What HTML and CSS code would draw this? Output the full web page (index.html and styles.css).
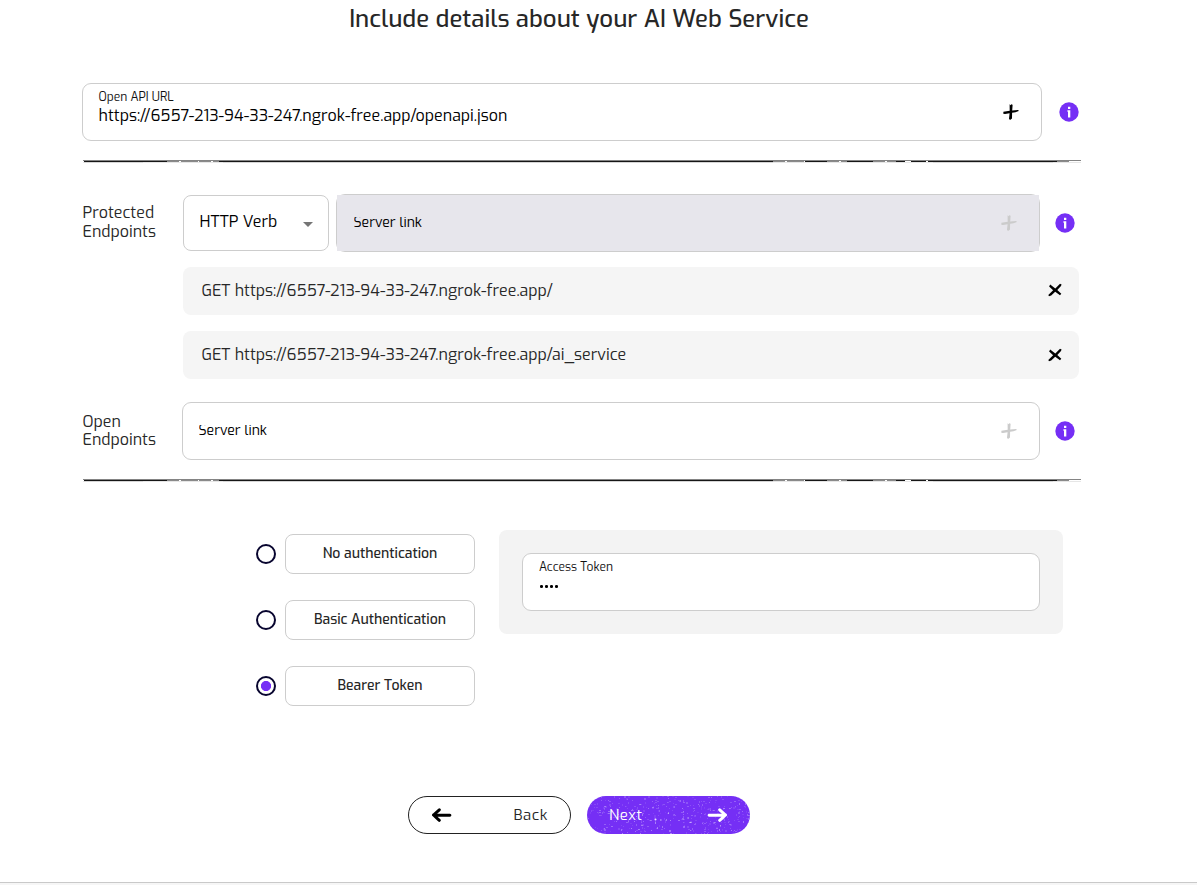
FILE: index.html
```
<!DOCTYPE html>
<html lang="en">
<head>
<meta charset="utf-8">
<title>AI Web Service</title>
<link rel="stylesheet" href="styles.css">
</head>
<body>
<svg class="defs" aria-hidden="true">
  <symbol id="plus" viewBox="0 0 18 18">
    <path d="M7.6 1.3 8.8 2.2 9.7 1 10.6 2 10.2 7.5 16.2 6.9 16.8 8 13.5 9.3 10.1 9.8 10 15.5 8 17 7 15.8 7.6 10.3 3 11 1.3 10.8 1.4 8.8 7.7 7.8Z" fill="currentColor"/>
  </symbol>
  <symbol id="cross" viewBox="0 0 14 14">
    <path d="M2.2 1.5 7.3 5.5 12 .8 13.6 1.4 13 3 9.3 6.9 13.3 10.7 12 12.2 7.2 8.8 3.2 12.4 1 13.2.3 12 5.1 7.2 1.1 3.5Z" fill="currentColor"/>
  </symbol>
  <symbol id="info" viewBox="0 0 20 20">
    <circle cx="10" cy="10" r="9.7" fill="#752ff5"/>
    <path d="M9 4.8h2.3v2.2h-2.3zM8.4 8.3h2.9v7.2H9V9.7h-.6z" fill="#fff"/>
  </symbol>
  <symbol id="arrow" viewBox="0 0 20 14">
    <path d="M1.6 7.2 18 7M12.2 1.8 18 7 12.2 12.3" fill="none" stroke="currentColor" stroke-width="3" stroke-linecap="round" stroke-linejoin="round"/>
  </symbol>
  <symbol id="rule" viewBox="0 0 998 3">
    <path d="M0 .5H998" stroke="#848484"/>
    <path d="M1 1.5H84M136 1.5H690M722 1.5H744M764 1.5H790M813 1.5H822M828 1.5H843M845 1.5H974" stroke="#161616"/>
    <path d="M84 1.5H136M690 1.5H722M744 1.5H764M790 1.5H813M974 1.5H986" stroke="#8a8a8a" stroke-dasharray="12 2 17 1"/>
    <path d="M1 2.5H60M140 2.5H690M850 2.5H970" stroke="#a5a5a5" stroke-opacity=".45"/>
    <path d="M0 2.5H1M60 2.5H140M690 2.5H850M970 2.5H998" stroke="#e6e6e6"/>
  </symbol>
</svg>

<main class="page">
  <h1 class="title">Include details about your AI Web Service</h1>

  <div class="row row-url">
    <div class="field field-url">
      <div class="stack">
        <span class="caption">Open API URL</span>
        <span class="value">https://6557-213-94-33-247.ngrok-free.app/openapi.json</span>
      </div>
      <svg class="plus"><use href="#plus"/></svg>
    </div>
    <svg class="info"><use href="#info"/></svg>
  </div>

  <svg class="rule"><use href="#rule"/></svg>

  <div class="row row-protected">
    <div class="label">Protected<br>Endpoints</div>
    <div class="select"><span>HTTP Verb</span><i class="caret"></i></div>
    <div class="field field-muted">
      <div class="field-fill">
        <span class="placeholder">Server link</span>
        <svg class="plus plus-off"><use href="#plus"/></svg>
      </div>
    </div>
    <svg class="info"><use href="#info"/></svg>
  </div>

  <div class="entries">
    <div class="entry"><span>GET https://6557-213-94-33-247.ngrok-free.app/</span><svg class="cross cross-first"><use href="#cross"/></svg></div>
    <div class="entry"><span>GET https://6557-213-94-33-247.ngrok-free.app/ai_service</span><svg class="cross"><use href="#cross"/></svg></div>
  </div>

  <div class="row row-open">
    <div class="label">Open<br>Endpoints</div>
    <div class="field field-open">
      <span class="placeholder">Server link</span>
      <svg class="plus plus-off"><use href="#plus"/></svg>
    </div>
    <svg class="info"><use href="#info"/></svg>
  </div>

  <svg class="rule"><use href="#rule"/></svg>

  <div class="auth">
    <div class="options">
      <div class="option"><i class="radio"></i><span class="choice">No authentication</span></div>
      <div class="option"><i class="radio"></i><span class="choice">Basic Authentication</span></div>
      <div class="option"><i class="radio radio-on"></i><span class="choice">Bearer Token</span></div>
    </div>
    <div class="panel">
      <div class="field field-token">
        <div class="stack">
          <span class="caption">Access Token</span>
          <span class="dots"><i></i><i></i><i></i><i></i></span>
        </div>
      </div>
    </div>
  </div>

  <div class="actions">
    <div class="btn btn-back"><svg class="arrow arrow-left"><use href="#arrow"/></svg><span>Back</span></div>
    <div class="btn btn-next"><svg class="grain" id="grain" viewBox="0 0 163 38"></svg><span>Next</span><svg class="arrow"><use href="#arrow"/></svg></div>
  </div>
</main>
<footer class="footer"></footer>
<script src="grain.js"></script>
</body>
</html>
```
FILE: styles.css
```
* { box-sizing: border-box; }
body {
  margin: 0;
  height: 885px;
  overflow: hidden;
  display: flex;
  flex-direction: column;
  background: #fff;
  color: #272727;
  font: 16px/18.5px Exo, "Exo 2", Roboto, sans-serif;
}
.defs { position: absolute; width: 0; height: 0; }
svg, i { display: block; flex: none; }
.page { height: 882px; flex: none; padding: 0 116px 0 82px; }
.title {
  margin: 0;
  height: 38px;
  padding-right: 5px;
  text-align: center;
  font-size: 24px;
  font-weight: 500;
  line-height: 38px;
}
.row { display: flex; }
.row-url { margin-top: 45px; height: 58px; align-items: center; }
.field {
  display: flex;
  align-items: center;
  justify-content: space-between;
  height: 58px;
  border: 1px solid #cdcdcd;
  border-radius: 9px;
  background: #fff;
  color: #000;
}
.field-url { width: 960px; padding: 0 21px 0 15.5px; }
.stack { align-self: flex-start; display: flex; flex-direction: column; }
.caption { padding-top: 5px; font-size: 12px; line-height: 16px; color: #111; }
.value { line-height: 22px; }
.info { width: 20px; height: 20px; }
.row-url .info { margin-left: 17px; }
.plus { width: 18px; height: 18px; }
.field-url .plus { margin-bottom: 1px; }
.plus-off { color: #cbcbcb; }
.rule { width: 998px; height: 3px; margin: 19px 0 0 1px; }

.row-protected { margin-top: 31px; height: 58px; align-items: center; }
.label { width: 101px; padding: 0 0 1px .5px; }
.row-open .label { width: 100px; padding-bottom: 0; }
.select {
  width: 146px;
  height: 56px;
  display: flex;
  align-items: center;
  justify-content: space-between;
  padding: 0 15px 0 15.5px;
  border: 1px solid #cdcdcd;
  border-radius: 8px;
  color: #000;
}
.select span { padding-bottom: 2px; }
.caret {
  margin-top: 3px;
  border: 5px solid transparent;
  border-top-color: #757575;
  border-bottom: 0;
}
.field-muted { width: 704px; margin-left: 7px; }
.field-fill {
  flex: 1;
  display: flex;
  align-items: center;
  justify-content: space-between;
  height: 56px;
  padding: 0 21px 0 16.5px;
  background: #e7e6ec;
}
.placeholder {
  height: 14px;
  margin-top: 2px;
  overflow: hidden;
  font-size: 14px;
  line-height: 11px;
}
.row-protected .info, .row-open .info { margin-left: 15px; }

.entries { display: grid; gap: 16px; margin: 15px 0 0 101px; width: 896px; }
.entry {
  display: flex;
  align-items: center;
  justify-content: space-between;
  height: 48px;
  padding: 0 17px 0 18.5px;
  border-radius: 8px;
  background: #f5f5f5;
}
.cross { width: 14px; height: 14px; color: #000; }
.cross-first { margin-bottom: 2px; }

.row-open { margin-top: 23px; height: 58px; align-items: center; }
.field-open { width: 858px; padding: 0 21px 0 15.5px; }

.auth { display: flex; margin: 48px 0 0 174px; height: 176px; }
.options { display: grid; gap: 26px; padding-top: 4px; align-content: start; }
.option { display: flex; align-items: center; gap: 9px; height: 40px; }
.radio {
  width: 20px;
  height: 20px;
  border: 2px solid #08052f;
  border-radius: 50%;
}
.radio-on { background: radial-gradient(circle, #752ff5 4.7px, transparent 5.4px); }
.choice {
  width: 190px;
  height: 40px;
  border: 1px solid #cdcdcd;
  border-radius: 8px;
  text-align: center;
  font-size: 14px;
  font-weight: 500;
  line-height: 37px;
}
.panel {
  width: 564px;
  height: 104px;
  margin-left: 24px;
  padding: 23px;
  border-radius: 8px;
  background: #f3f3f3;
}
.field-token { padding-left: 16px; }
.dots { display: flex; gap: 2.6px; padding: 10px 0 0 1px; }
.dots i { width: 2.5px; height: 2.5px; border-radius: 50%; background: #000; }

.actions { display: flex; gap: 16px; margin: 90px 0 0 326px; }
.btn {
  position: relative;
  width: 163px;
  height: 38px;
  display: flex;
  align-items: center;
  justify-content: space-between;
  padding: 0 22px;
  border-radius: 19px;
  font-size: 15px;
  letter-spacing: .6px;
  overflow: hidden;
}
.btn-back { border: 1px solid #222; }
.btn-next { background: #752ff5; color: #fff; }
.btn span { position: relative; padding-top: 1px; }
.arrow { position: relative; width: 21px; height: 14px; color: #000; }
.arrow-left { transform: scaleX(-1); }
.btn-next .arrow { color: #fff; }
.grain { position: absolute; inset: 0; width: 163px; height: 38px; }
.footer { height: 3px; flex: none; border-top: 1px solid #c9c9c9; background: #f6f6f6; }
```
FILE: grain.js
```
// Scatters faint specks over the primary button.
let seed = 90417;
const rand = () => (seed = (seed * 16807) % 2147483647) / 2147483647;
let specks = '';
for (let i = 0; i < 420; i++) {
  const x = Math.floor(rand() * 163), y = Math.floor(rand() * 38);
  const o = (0.08 + rand() * rand() * 0.35).toFixed(2);
  specks += `<rect x="${x}" y="${y}" width="${rand() > 0.6 ? 2 : 1}" height="${rand() > 0.7 ? 2 : 1}" fill="#fff" opacity="${o}"/>`;
}
specks += '<circle cx="68.5" cy="23.5" r="1" fill="#fff" opacity=".9"/>';
document.getElementById('grain').innerHTML = specks;
```
